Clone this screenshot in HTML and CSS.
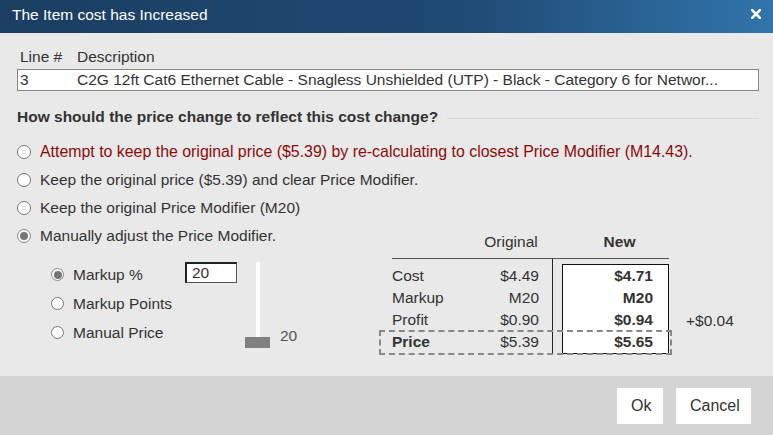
FILE: index.html
```html
<!DOCTYPE html>
<html lang="en">
  <head>
    <meta charset="UTF-8" />
    <title>The Item cost has Increased</title>
    <link rel="stylesheet" href="styles.css">
  </head>
  <body>
    <div class="dialog">
      <div class="titlebar">
        <span class="title">The Item cost has Increased</span>
        <svg class="close" width="10" height="10" viewBox="0 0 10 10">
          <path d="M1 1L9 9M9 1L1 9" stroke="#fff" stroke-width="2.6" stroke-linecap="square" />
        </svg>
      </div>

      <div class="content">
        <div class="line-head">
          <span class="col-line">Line #</span>
          <span>Description</span>
        </div>
        <div class="line-box">
          <span class="col-line">3</span>
          <span>C2G 12ft Cat6 Ethernet Cable - Snagless Unshielded (UTP) - Black - Category 6 for Networ...</span>
        </div>

        <div class="question">
          <span>How should the price change to reflect this cost change?</span>
          <span class="rule"></span>
        </div>

        <div class="opt red"><span class="radio"></span>Attempt to keep the original price ($5.39) by re-calculating to closest Price Modifier (M14.43).</div>
        <div class="opt"><span class="radio"></span>Keep the original price ($5.39) and clear Price Modifier.</div>
        <div class="opt"><span class="radio"></span>Keep the original Price Modifier (M20)</div>

        <div class="manual">
          <div class="manual-left">
            <div class="opt"><span class="radio on"></span>Manually adjust the Price Modifier.</div>
            <div class="sub">
              <div class="sub-options">
                <div class="opt"><span class="radio on"></span>Markup %</div>
                <div class="opt"><span class="radio"></span>Markup Points</div>
                <div class="opt"><span class="radio"></span>Manual Price</div>
              </div>
              <div class="markup-input">20</div>
              <div class="slider">
                <span class="track"></span>
                <span class="thumb"></span>
              </div>
              <div class="slider-val">20</div>
            </div>
          </div>

          <div class="compare">
            <div class="compare-head">
              <span></span>
              <span class="h-orig">Original</span>
              <span class="h-new">New</span>
            </div>
            <div class="compare-body">
              <div class="orig">
                <span>Cost</span><span class="num">$4.49</span>
                <span>Markup</span><span class="num">M20</span>
                <span>Profit</span><span class="num">$0.90</span>
                <span class="b">Price</span><span class="num">$5.39</span>
              </div>
              <div class="new">
                <span>$4.71</span>
                <span>M20</span>
                <span>$0.94</span>
                <span>$5.65</span>
              </div>
              <div class="delta">+$0.04</div>
            </div>
            <div class="price-mark"></div>
          </div>
        </div>
      </div>

      <div class="footer">
        <button class="btn ok">Ok</button>
        <button class="btn">Cancel</button>
      </div>
    </div>
  </body>
</html>
```

FILE: styles.css
```css
* {
  margin: 0;
  padding: 0;
  box-sizing: border-box;
}

body {
  font-family: "Liberation Sans", Arial, sans-serif;
  font-size: 15.5px;
  color: #333;
  background: #e9e9e9;
}

.dialog {
  width: 773px;
  height: 435px;
  display: flex;
  flex-direction: column;
  background: #e9e9e9;
}

.titlebar {
  height: 33px;
  display: flex;
  align-items: center;
  justify-content: space-between;
  padding: 0 12px 4px 12px;
  background: linear-gradient(to right, #1b3e62 0%, #1f4a74 60%, #3174ab 100%);
  color: #fff;
}

.close {
  margin-bottom: 1px;
}

.content {
  flex: 1;
  padding: 0 14px 0 17px;
}

.line-head {
  display: flex;
  margin-top: 15px;
  padding-left: 3px;
  line-height: 18px;
}

.col-line {
  width: 57px;
  flex-shrink: 0;
}

.line-box {
  display: flex;
  margin-top: 3px;
  height: 22px;
  width: 742px;
  padding-left: 2px;
  line-height: 20px;
  background: #fff;
  border: 1px solid #888;
  white-space: nowrap;
  overflow: hidden;
}

.question {
  display: flex;
  align-items: center;
  gap: 9px;
  margin-top: 17px;
  line-height: 18px;
  font-weight: bold;
  width: 742px;
}

.question .rule {
  flex: 1;
  height: 1px;
  margin-top: 2px;
  background: #d6d6d6;
}

.opt {
  display: flex;
  align-items: center;
  height: 28px;
  white-space: nowrap;
}

.opt.red {
  margin-top: 12px;
  font-size: 15.9px;
  color: #8e0a0a;
}

.radio {
  width: 14px;
  height: 14px;
  margin-right: 9px;
  border: 1px solid #777;
  border-radius: 50%;
  background: #fff;
  flex-shrink: 0;
  position: relative;
}

.radio.on {
  border-color: #888;
}

.radio.on::after {
  content: "";
  position: absolute;
  left: 2px;
  top: 2px;
  width: 8px;
  height: 8px;
  border-radius: 50%;
  background: #777;
}

.manual {
  display: flex;
}

.manual-left {
  width: 362px;
  flex-shrink: 0;
}

.sub {
  display: flex;
  margin-top: 10px;
  padding-left: 34px;
}

.sub-options {
  width: 134px;
}

.sub-options .opt {
  height: 29px;
}

.sub-options .radio {
  width: 13px;
  height: 13px;
}

.sub-options .radio.on::after {
  left: 1.5px;
  top: 1.5px;
}

.markup-input {
  width: 52px;
  height: 21px;
  margin-top: 2px;
  padding-left: 5px;
  line-height: 17px;
  background: #fff;
  border: 1px solid #555;
  border-top: 2px solid #222;
  border-left: 2px solid #222;
}

.slider {
  width: 25px;
  margin: 2px 0 0 8px;
  display: flex;
  flex-direction: column;
  align-items: center;
}

.slider .track {
  width: 4px;
  height: 75px;
  background: #fff;
}

.slider .thumb {
  width: 25px;
  height: 11px;
  background: #808080;
}

.slider-val {
  margin: 67px 0 0 10px;
  line-height: 18px;
  color: #555;
}

.compare {
  position: relative;
  padding-left: 13px;
}

.compare-head {
  display: grid;
  grid-template-columns: 78px 82px 117px;
  width: 277px;
  padding-top: 10px;
  padding-bottom: 6px;
  line-height: 20px;
  border-bottom: 1px solid #555;
}

.h-orig {
  text-align: center;
}

.h-new {
  text-align: center;
  padding-left: 18px;
  font-weight: bold;
}

.compare-body {
  display: flex;
  align-items: flex-start;
}

.orig {
  display: grid;
  grid-template-columns: 78px 82px;
  grid-auto-rows: 22px;
  align-items: center;
  padding-top: 6px;
  border-right: 1px solid #222;
}

.orig .num {
  text-align: right;
  padding-right: 13px;
}

.b {
  font-weight: bold;
}

.new {
  display: grid;
  grid-auto-rows: 22px;
  align-items: center;
  width: 107px;
  margin: 5px 0 0 9px;
  padding-right: 15px;
  text-align: right;
  font-weight: bold;
  background: #fff;
  border: 1px solid #111;
}

.delta {
  margin: 53px 0 0 17px;
  line-height: 18px;
}

.price-mark {
  position: absolute;
  left: 0;
  top: 108px;
  width: 293px;
  height: 25px;
  border: 2px dashed #888;
}

.footer {
  height: 59px;
  display: flex;
  align-items: center;
  justify-content: flex-end;
  gap: 13px;
  padding: 1px 22px 0 0;
  background: #d4d4d4;
}

.btn {
  height: 36px;
  padding: 0 14px;
  font-family: inherit;
  font-size: 16px;
  color: #333;
  background: #fff;
  border: none;
}

.btn.ok {
  width: 46px;
}

.btn:not(.ok) {
  width: 75px;
}
```
